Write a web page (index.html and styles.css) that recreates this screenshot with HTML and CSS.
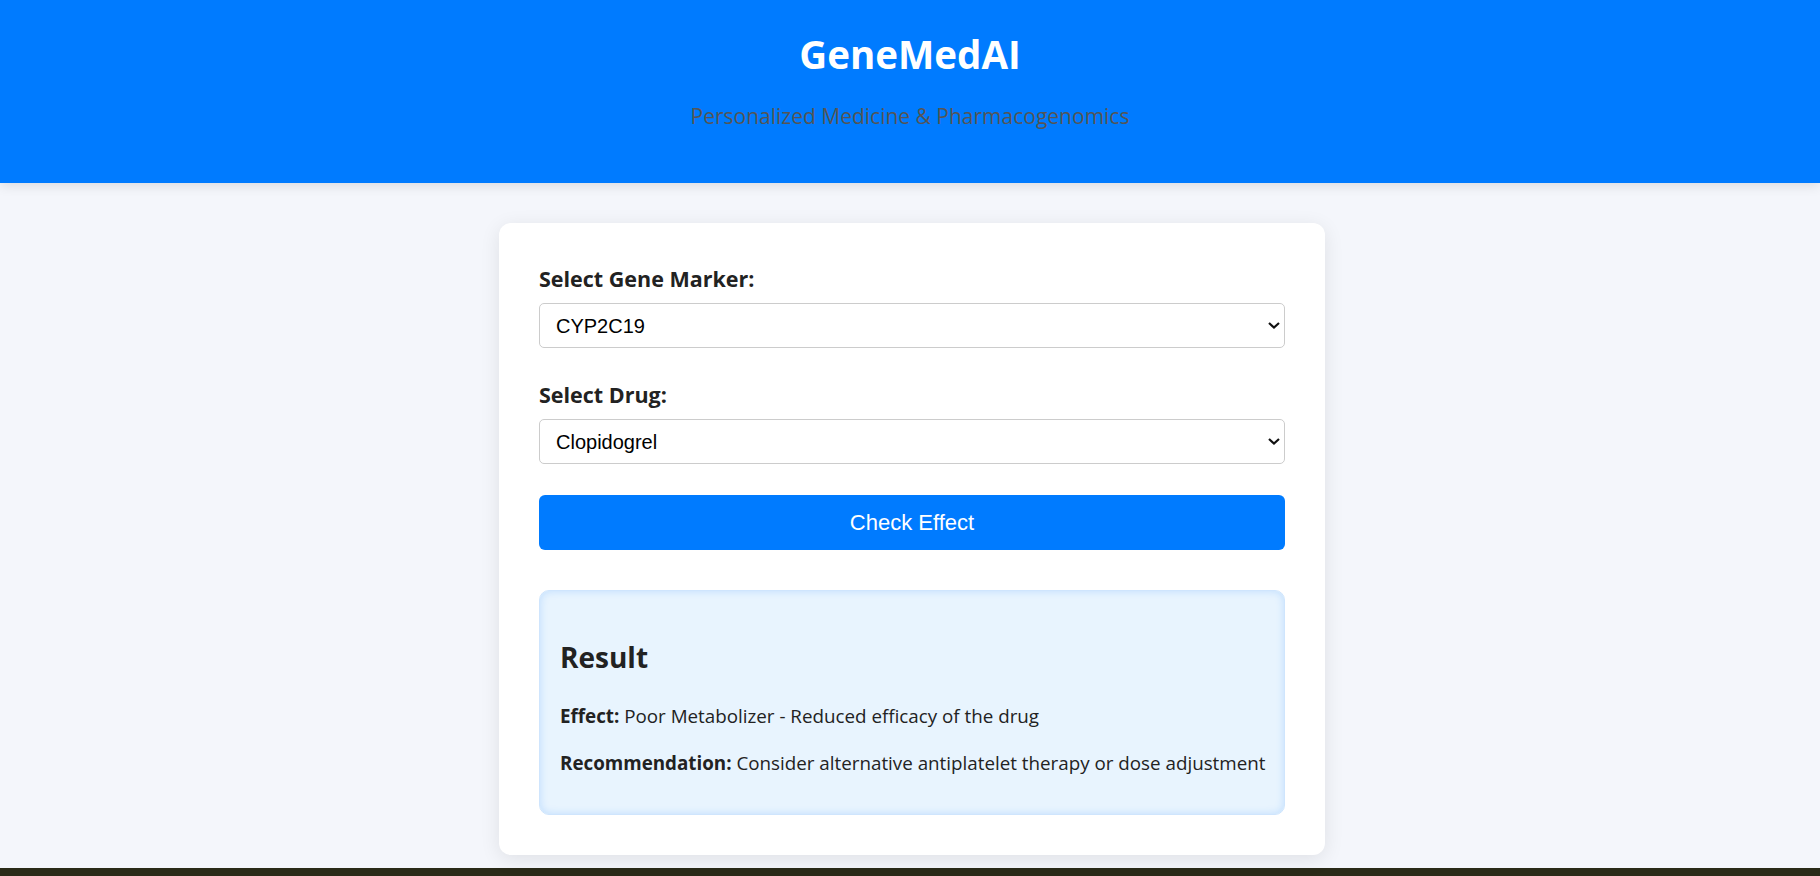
FILE: index.html
```html
<!DOCTYPE html>
<html lang="en">
<head>
<meta charset="utf-8">
<title>GeneMedAI</title>
<link rel="stylesheet" href="styles.css">
</head>
<body>
<header class="site-header">
  <h1 class="brand">GeneMedAI</h1>
  <p class="tagline">Personalized Medicine &amp; Pharmacogenomics</p>
</header>
<main class="page">
  <section class="card">
    <div class="field">
      <label class="field-label" for="gene">Select Gene Marker:</label>
      <div class="select-wrap">
        <select id="gene" class="select">
          <option>CYP2C19</option>
        </select>
        <svg class="chevron" viewBox="0 0 12 7" width="12" height="7"><path d="M1 1l5 4.5L11 1" fill="none" stroke="#111" stroke-width="2.2"/></svg>
      </div>
    </div>
    <div class="field">
      <label class="field-label" for="drug">Select Drug:</label>
      <div class="select-wrap">
        <select id="drug" class="select">
          <option>Clopidogrel</option>
        </select>
        <svg class="chevron" viewBox="0 0 12 7" width="12" height="7"><path d="M1 1l5 4.5L11 1" fill="none" stroke="#111" stroke-width="2.2"/></svg>
      </div>
    </div>
    <button class="btn" type="button">Check Effect</button>
    <div class="result">
      <h2 class="result-title">Result</h2>
      <p class="result-line"><strong>Effect:</strong> Poor Metabolizer - Reduced efficacy of the drug</p>
      <p class="result-line"><strong>Recommendation:</strong> Consider alternative antiplatelet therapy or dose adjustment</p>
    </div>
  </section>
</main>
<footer class="bottom-bar"></footer>
</body>
</html>
```
FILE: styles.css
```css
* { box-sizing: border-box; }
html, body { margin: 0; padding: 0; }
body {
  background: #f4f6fb;
  font-family: "Open Sans", "Noto Sans", sans-serif;
  color: #222;
}
.site-header {
  background: #007bff;
  padding: 30px 0 55px;
  text-align: center;
  box-shadow: 0 2px 12px rgba(0, 0, 0, 0.12);
  position: relative;
}
.brand {
  margin: 0;
  font-size: 38.5px;
  line-height: 48px;
  font-weight: 700;
  color: #fff;
}
.tagline {
  margin: 26px 0 0;
  font-size: 21px;
  line-height: 24px;
  color: #555;
}
.page {
  display: flex;
  justify-content: center;
  padding: 40px 0 13px 4px;
}
.card {
  width: 826px;
  background: #fff;
  border-radius: 12px;
  padding: 44px 40px 40px;
  box-shadow: 0 4px 20px rgba(0, 0, 0, 0.09);
}
.field { margin-bottom: 35px; }
.field + .field { margin-bottom: 31px; }
.field-label {
  display: block;
  font-size: 21.5px;
  line-height: 24px;
  font-weight: 700;
  color: #222;
  margin-bottom: 12px;
}
.select-wrap { position: relative; }
.select {
  display: block;
  width: 100%;
  height: 45px;
  appearance: none;
  -webkit-appearance: none;
  background: #fff;
  border: 1px solid #ccc;
  border-radius: 5px;
  padding: 0 30px 0 16px;
  font-family: "Liberation Sans", Arial, sans-serif;
  font-size: 20px;
  color: #000;
}
.chevron {
  position: absolute;
  right: 5px;
  top: 19px;
  pointer-events: none;
}
.btn {
  display: block;
  width: 100%;
  height: 55px;
  border: 0;
  border-radius: 6px;
  background: #007bff;
  color: #fff;
  font-family: "Liberation Sans", Arial, sans-serif;
  font-size: 22px;
  cursor: pointer;
}
.result {
  margin-top: 40px;
  background: #e8f4fe;
  border: 1px solid #cfe5fd;
  border-radius: 10px;
  padding: 48px 20px 39px;
  box-shadow: inset 0 0 8px rgba(0, 123, 255, 0.18);
}
.result-title {
  margin: 0;
  font-size: 28px;
  line-height: 36px;
  font-weight: 700;
  color: #222;
}
.result-line {
  margin: 29px 0 0;
  font-size: 18.8px;
  line-height: 24px;
  color: #222;
  white-space: nowrap;
}
.result-line + .result-line { margin-top: 23px; }
.result-line strong { font-weight: 700; }
.bottom-bar {
  height: 40px;
  background: #2a2a18;
}
```
